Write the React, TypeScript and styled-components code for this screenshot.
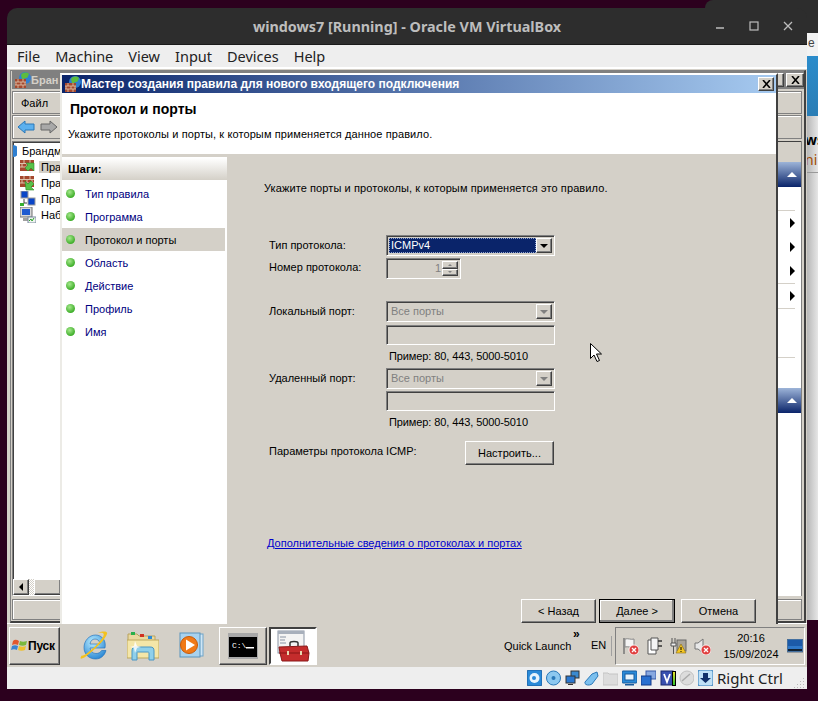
import React from 'react';
import styled, { createGlobalStyle, css } from 'styled-components';

const FACE = '#d4d0c8';
const UI_FONT = `'Liberation Sans', Arial, sans-serif`;

const GlobalStyle = createGlobalStyle`
  html, body { margin: 0; padding: 0; background: #2c001e; }
  * { box-sizing: border-box; }
  svg { flex-shrink: 0; }
`;

const raised = css`
  background: ${FACE};
  border-top: 1px solid #fff;
  border-left: 1px solid #fff;
  border-right: 1px solid #404040;
  border-bottom: 1px solid #404040;
  box-shadow: inset -1px -1px 0 #808080;
`;

const sunken = css`
  border-top: 1px solid #808080;
  border-left: 1px solid #808080;
  border-right: 1px solid #fff;
  border-bottom: 1px solid #fff;
  box-shadow: inset 1px 1px 0 #404040, inset -1px -1px 0 ${FACE};
`;

const Screen = styled.div`
  position: relative;
  width: 818px;
  height: 701px;
  overflow: hidden;
  background: #2c001e;
  font-family: ${UI_FONT};
  font-size: 11px;
  color: #000;
`;

/* the other host window that peeks out on the right */
const BackWindow = styled.div`
  position: absolute;
  left: 705px;
  top: 0;
  width: 113px;
  height: 620px;
  display: flex;
  flex-direction: column;
`;
const BackTitle = styled.div`
  height: 33px;
  background: #2d2d2d;
  border-radius: 8px 0 0 0;
`;
const BackMenu = styled.div`
  height: 23px;
  padding-left: 103px;
  background: #f2f2f2;
  font-size: 12px;
  color: #444;
  line-height: 20px;
`;
const BackBlue = styled.div`
  height: 60px;
  background: linear-gradient(#2b8ccb, #2a7db5);
`;
const BackBody = styled.div`
  flex: 1;
  padding-left: 100px;
  background: linear-gradient(90deg, #b8b8b8 102px, #e6e6e6 113px);
`;
const BackStrong = styled.div`
  margin-top: 14px;
  height: 20px;
  font: bold 14px 'Noto Sans', sans-serif;
  white-space: nowrap;
`;
const BackSub = styled.div`
  height: 23px;
  margin-left: -100px;
  padding-left: 100px;
  border-bottom: 1px solid #999;
  font: 14px 'Noto Sans', sans-serif;
  color: #a34b00;
  white-space: nowrap;
`;

/* VirtualBox host window */
const HostWindow = styled.div`
  position: absolute;
  left: 7px;
  top: 8px;
  width: 800px;
  height: 681px;
  display: flex;
  flex-direction: column;
  border-radius: 10px 10px 0 0;
  overflow: hidden;
`;
const HostTitle = styled.div`
  position: relative;
  flex: 0 0 37px;
  display: flex;
  align-items: center;
  justify-content: center;
  background: #2d2d2d;
  color: #bdbdbd;
  font: bold 14.35px 'Noto Sans', sans-serif;
  border-bottom: 1px solid #1a1a1a;
`;
const HostControls = styled.div`
  position: absolute;
  right: 8px;
  top: 13px;
  display: flex;
  gap: 18px;
  color: #bdbdbd;
`;
const HostMenu = styled.div`
  flex: 0 0 22px;
  display: flex;
  gap: 15px;
  padding-left: 10px;
  align-items: center;
  background: #eeeeee;
  color: #222;
  font: 14.5px 'Noto Sans', sans-serif;
`;
const Guest = styled.div`
  flex: 0 0 600px;
  display: flex;
  flex-direction: column;
  background: ${FACE};
`;
const GuestDesk = styled.div`
  position: relative;
  flex: 1;
  border-top: 2px solid #fff;
`;

/* mmc window behind the wizard */
const Mmc = styled.div`
  position: absolute;
  left: 3px;
  top: 1px;
  width: 796px;
  height: 553px;
  display: flex;
  flex-direction: column;
  padding-left: 1px;
  border: 1px solid #808080;
  border-right: 2px solid #404040;
  border-bottom: 2px solid #404040;
  background: ${FACE};
`;
const MmcTitle = styled.div`
  flex: 0 0 18px;
  display: flex;
  align-items: center;
  justify-content: space-between;
  padding: 0 0 0 3px;
  background: #808080;
  color: #d4d0c8;
  font-weight: bold;
`;
const MmcTitleLeft = styled.div`
  display: flex;
  align-items: center;
`;
const MmcTitleBtns = styled.div`
  display: flex;
  gap: 2px;
`;
const MmcBand = styled.div<{ $h: number; $mt: number; $pl: number }>`
  flex: 0 0 ${({ $h }) => $h}px;
  display: flex;
  align-items: center;
  gap: 5px;
  padding-left: ${({ $pl }) => $pl}px;
  margin: ${({ $mt }) => $mt}px 2px 0 0;
  border: 1px solid #808080;
  box-shadow: inset 1px 1px 0 #fff;
`;
const MmcContent = styled.div`
  flex: 1;
  display: flex;
  justify-content: space-between;
  margin: 2px 2px 0 0;
  min-height: 0;
`;
const TreePane = styled.div`
  width: 49px;
  display: flex;
  flex-direction: column;
  background: #fff;
  ${sunken};
  border-right: 0;
  padding: 1px 0 0 0;
  overflow: hidden;
`;
const TreeRow = styled.div<{ $indent: number; $active?: boolean }>`
  display: flex;
  align-items: center;
  gap: 3px;
  height: 16px;
  padding-left: ${({ $indent }) => $indent}px;
  white-space: nowrap;
  span {
    background: ${({ $active }) => ($active ? FACE : 'transparent')};
    padding-left: 2px;
  }
`;
const TreeSpacer = styled.div`
  flex: 1;
`;
const HScroll = styled.div`
  flex: 0 0 16px;
  display: flex;
`;
const ScrollBtn = styled.div`
  width: 16px;
  ${raised};
  display: flex;
  align-items: center;
  justify-content: center;
`;
const ScrollDither = styled.div`
  width: 5px;
  background: repeating-conic-gradient(#fff 0 25%, ${FACE} 0 50%) 0 0 / 2px 2px;
`;
const ScrollThumb = styled.div`
  flex: 1;
  ${raised};
`;
const StatusBox = styled.div`
  flex: 0 0 21px;
  margin: 3px 2px 1px 0;
  border: 1px solid #808080;
  box-shadow: inset 1px 1px 0 #fff;
`;
const LeftArrow = styled.div`
  width: 0;
  height: 0;
  border: 4px solid transparent;
  border-left: 0;
  border-right: 4px solid #000;
`;
const ActionPane = styled.div`
  width: 24px;
  display: flex;
  flex-direction: column;
  background: #fff;
  border-right: 1px solid #808080;
`;
const ActionHead = styled.div`
  flex: 0 0 21px;
  background: ${FACE};
  border-top: 1px solid #404040;
`;
const ActionBlue = styled.div`
  flex: 0 0 25px;
  background: linear-gradient(#9db4d8, #0a246a);
  display: flex;
  align-items: center;
  justify-content: center;
  padding-left: 4px;
`;
const UpArrow = styled.div`
  width: 0;
  height: 0;
  border: 5px solid transparent;
  border-top: 0;
  border-bottom: 5px solid #fff;
`;
const ActionRow = styled.div<{ $h: number; $line?: boolean }>`
  flex: 0 0 ${({ $h }) => $h}px;
  display: flex;
  align-items: center;
  justify-content: center;
  margin-right: 6px;
  border-bottom: ${({ $line }) => ($line ? '1px solid #d4d0c8' : '0')};
`;
const RightArrow = styled.div`
  width: 0;
  height: 0;
  margin-left: 12px;
  border: 5px solid transparent;
  border-right: 0;
  border-left: 5px solid #000;
`;
const ActionFoot = styled.div`
  flex: 1;
  background: #fff;
`;
const CloseBtn = styled.div<{ $w?: number }>`
  width: ${({ $w }) => $w ?? 16}px;
  height: 14px;
  ${raised};
  display: flex;
  align-items: center;
  justify-content: center;
`;

/* wizard */
const Wizard = styled.div`
  position: absolute;
  left: 53px;
  top: 4px;
  width: 718px;
  height: 551px;
  display: flex;
  flex-direction: column;
  background: ${FACE};
  border-left: 2px solid #ecebe6;
  border-right: 2px solid #404040;
  border-top: 2px solid #fff;
`;
const WizTitle = styled.div`
  flex: 0 0 18px;
  display: flex;
  align-items: center;
  padding: 0 2px 0 3px;
  color: #fff;
  font-weight: bold;
  font-size: 12px;
  background: linear-gradient(90deg, #0a246a, #a6caf0);
`;
const WizTitleText = styled.div`
  flex: 1;
`;
const WizHeader = styled.div`
  flex: 0 0 63px;
  padding: 8px 0 0 8px;
  background: #fff;
  border-bottom: 2px solid ${FACE};
`;
const WizHeading = styled.div`
  font-weight: bold;
  font-size: 14px;
  line-height: 16px;
`;
const WizSub = styled.div`
  margin-top: 10px;
  margin-left: -2px;
  line-height: 14px;
  letter-spacing: 0.1px;
`;
const WizBody = styled.div`
  flex: 1;
  display: flex;
  min-height: 0;
  background: #fff;
`;
const Steps = styled.div`
  width: 167px;
  padding-top: 1px;
  border-top: 1px solid ${FACE};
  border-right: 2px solid ${FACE};
`;
const StepsHead = styled.div`
  height: 22px;
  padding-left: 6px;
  display: flex;
  align-items: center;
  font-weight: bold;
  font-size: 11.5px;
  background: linear-gradient(#fff, ${FACE});
  margin-bottom: 2px;
`;
const StepRow = styled.div<{ $active?: boolean }>`
  height: 23px;
  display: flex;
  align-items: center;
  gap: 10px;
  padding-left: 4px;
  margin-right: 2px;
  color: ${({ $active }) => ($active ? '#000' : '#000080')};
  background: ${({ $active }) => ($active ? FACE : 'transparent')};
`;
const StepDot = styled.div`
  width: 9px;
  height: 9px;
  border-radius: 50%;
  background: radial-gradient(circle at 40% 35%, #a5e88c, #3fae2a 70%);
`;
const FormPane = styled.div`
  flex: 1;
  display: flex;
  flex-direction: column;
  background: ${FACE};
  padding-left: 35px;
  padding-top: 25px;
`;
const Intro = styled.div`
  line-height: 14px;
  margin-bottom: 40px;
  letter-spacing: 0.1px;
`;
const FormRow = styled.div<{ $mt?: number }>`
  display: grid;
  grid-template-columns: 117px 169px;
  align-items: start;
  padding-left: 5px;
  margin-top: ${({ $mt }) => $mt ?? 0}px;
`;
const FieldLabel = styled.div<{ $h: number }>`
  height: ${({ $h }) => $h}px;
  line-height: ${({ $h }) => $h - 1}px;
  white-space: nowrap;
`;
const Combo = styled.div<{ $disabled?: boolean }>`
  height: 21px;
  display: flex;
  padding: 2px;
  ${sunken};
  color: ${({ $disabled }) => ($disabled ? '#808080' : '#000')};
`;
const ComboValue = styled.div<{ $selected?: boolean }>`
  flex: 1;
  padding-left: 2px;
  line-height: 15px;
  color: ${({ $selected }) => ($selected ? '#fff' : 'inherit')};
  background: ${({ $selected }) => ($selected ? '#0a246a' : 'transparent')};
  outline: ${({ $selected }) => ($selected ? '1px dotted #8fa3d0' : '0')};
  outline-offset: -1px;
`;
const ComboBtn = styled.div`
  width: 16px;
  ${raised};
  display: flex;
  align-items: center;
  justify-content: center;
`;
const DownArrow = styled.div<{ $color: string }>`
  width: 0;
  height: 0;
  border: 4px solid transparent;
  border-bottom: 0;
  border-top: 4px solid ${({ $color }) => $color};
`;
const Spin = styled.div`
  width: 75px;
  height: 21px;
  display: flex;
  padding: 2px;
  ${sunken};
`;
const SpinValue = styled.div`
  flex: 1;
  text-align: right;
  padding-right: 1px;
  line-height: 15px;
  color: #808080;
`;
const SpinBtns = styled.div`
  width: 16px;
  display: flex;
  flex-direction: column;
`;
const SpinBtn = styled.div<{ $up?: boolean }>`
  flex: 1;
  ${raised};
  display: flex;
  align-items: center;
  justify-content: center;
  &::before {
    content: '';
    border: 2px solid transparent;
    ${({ $up }) =>
      $up
        ? css`
            border-top: 0;
            border-bottom: 2px solid #808080;
          `
        : css`
            border-bottom: 0;
            border-top: 2px solid #808080;
          `}
  }
`;
const TextField = styled.div<{ $mt: number }>`
  height: 20px;
  margin-top: ${({ $mt }) => $mt}px;
  ${sunken};
`;
const Hint = styled.div`
  padding-left: 3px;
  margin-top: 3px;
  line-height: 16px;
  height: 16px;
  letter-spacing: -0.1px;
`;
const PushButton = styled.div<{ $w: number; $ml?: number; $default?: boolean }>`
  width: ${({ $w }) => $w}px;
  height: 24px;
  margin-left: ${({ $ml }) => $ml ?? 0}px;
  display: flex;
  align-items: center;
  justify-content: center;
  ${raised};
  ${({ $default }) =>
    $default &&
    css`
      outline: 1px solid #000;
      outline-offset: -1px;
      box-shadow: inset -2px -2px 0 #808080, inset 1px 1px 0 #fff;
    `}
`;
const InfoLink = styled.a`
  margin-top: 71px;
  margin-left: 3px;
  line-height: 14px;
  color: #0000cc;
  text-decoration: underline;
`;
const WizFooter = styled.div`
  margin-top: auto;
  margin-bottom: 1px;
  display: flex;
  gap: 3px;
  padding-left: 257px;
`;

/* guest taskbar */
const Taskbar = styled.div`
  flex: 0 0 44px;
  display: flex;
  align-items: center;
  padding-left: 2px;
  background: ${FACE};
  border-top: 1px solid #fff;
`;
const StartBtn = styled.div`
  width: 51px;
  height: 38px;
  ${raised};
  display: flex;
  align-items: center;
  padding-left: 1px;
  font-weight: bold;
  font-size: 12px;
  letter-spacing: -0.2px;
`;
const QuickIcons = styled.div`
  width: 159px;
  display: flex;
  align-items: center;
  gap: 18px;
  padding-left: 19px;
`;
const TaskBtn = styled.div<{ $pressed?: boolean }>`
  width: 48px;
  height: 38px;
  margin-right: 2px;
  display: flex;
  align-items: center;
  justify-content: center;
  ${({ $pressed }) =>
    $pressed
      ? css`
          background: #fff;
          border-top: 2px solid #404040;
          border-left: 2px solid #404040;
          border-right: 2px solid #fff;
          border-bottom: 2px solid #fff;
        `
      : raised}
`;
const TaskSpacer = styled.div`
  flex: 1;
`;
const QuickLaunch = styled.div`
  position: relative;
  width: 87px;
  padding-left: 3px;
  line-height: 14px;
`;
const Chevrons = styled.div`
  position: absolute;
  left: 72px;
  top: -12px;
  font-weight: bold;
  font-size: 12px;
`;
const Lang = styled.div`
  width: 24px;
  padding-left: 3px;
  border-right: 1px solid #a0a0a0;
  height: 20px;
  line-height: 18px;
`;
const Tray = styled.div`
  width: 190px;
  height: 38px;
  margin: 0 2px 0 3px;
  display: flex;
  align-items: center;
  gap: 7px;
  padding-left: 6px;
  border: 1px solid #808080;
  border-right-color: #fff;
  border-bottom-color: #fff;
`;
const Clock = styled.div`
  flex: 0 0 62px;
  margin: 0 -2px 0 2px;
  text-align: center;
  line-height: 16px;
`;

/* virtualbox status bar */
const HostStatus = styled.div`
  flex: 1;
  display: flex;
  align-items: center;
  padding-left: 520px;
  gap: 4px;
  background: #eeeeee;
`;
const HostKey = styled.div`
  color: #222;
  font: 15px 'Noto Sans', sans-serif;
  white-space: nowrap;
`;
const Grip = styled.svg`
  margin-left: auto;
  margin-right: 2px;
  align-self: flex-end;
  margin-bottom: 1px;
`;
const Led = styled.div`
  width: 4px;
  height: 15px;
  margin: 0 -1px 0 -7px;
  border: 1px solid #000;
  background: linear-gradient(#e8e030, #2cc02c);
`;
const MouseCursor = styled.svg`
  position: absolute;
  left: 589px;
  top: 342px;
`;

/* small hand-drawn icons */
const Brick = () => (
  <svg width="16" height="16" viewBox="0 0 16 16">
    <circle cx="10" cy="6" r="6" fill="#2f7fd0" />
    <path d="M6 3c2-3 6-3 8-1-1 2-1 4-3 4S9 8 7 7z" fill="#5dbb3f" />
    <rect x="0" y="7" width="11" height="9" fill="#a5482e" />
    <path d="M0 10h11M0 13h11M3 7v3M8 7v3M1 10v3M6 10v3M10 10v3M3 13v3M8 13v3" stroke="#e0c8b0" strokeWidth="0.8" />
  </svg>
);
const RuleIcon = ({ down }: { down?: boolean }) => (
  <svg width="16" height="16" viewBox="0 0 16 16">
    <rect x="0" y="1" width="14" height="11" fill="#a5482e" />
    <path d="M0 4.500h14M0 8h14M4 1v3.500M10 1v3.500M2 4.500V8M7 4.500V8M12 4.500V8" stroke="#dcc4ac" />
    <path
      d={down ? 'M5 6l3 3 3-3 3 3-3 3 3 3H6z' : 'M6 4h8v8l-3-3-3 3-3-3 3-3z'}
      fill="#58c24a"
      stroke="#2c8a26"
      strokeWidth="0.6"
    />
  </svg>
);
const NetIcon = () => (
  <svg width="16" height="16" viewBox="0 0 16 16">
    <rect x="1" y="0" width="7" height="7" fill="#0a46c8" stroke="#9a9a9a" />
    <rect x="8" y="7" width="7" height="7" fill="#0a46c8" stroke="#9a9a9a" />
    <path d="M4 8v4h3" stroke="#444" fill="none" />
    <rect x="0" y="12" width="4" height="3" fill="#36b030" />
  </svg>
);
const MonitorIcon = () => (
  <svg width="16" height="16" viewBox="0 0 16 16">
    <rect x="0" y="0" width="12" height="10" fill="#d8d8d8" stroke="#707070" />
    <rect x="2" y="2" width="8" height="6" fill="#1e5ad0" />
    <rect x="3" y="11" width="6" height="3" fill="#a0a0a0" />
    <rect x="8" y="10" width="8" height="6" fill="#eef4ee" stroke="#7a8aa0" />
    <path d="M9 14l2-2 1 2 2-3" stroke="#2ca02c" fill="none" />
  </svg>
);
const CloseGlyph = () => (
  <svg width="9" height="8" viewBox="0 0 9 8">
    <path d="M1 0l7 8M8 0L1 8" stroke="#000" strokeWidth="1.6" />
  </svg>
);
const WinFlag = () => (
  <svg width="17" height="15" viewBox="0 0 17 15">
    <path d="M2 3c2-2 4-1 6 0l-1 4C5 6 3 6 1 7z" fill="#e2572c" />
    <path d="M9 3c2 1 4 1 7 0l-1 4c-2 1-5 1-7 0z" fill="#7ab93c" />
    <path d="M1 8c2-1 4-1 6 0l-1 4c-2-1-4-1-6 0z" fill="#3a82d0" />
    <path d="M8 8c2 1 5 1 7 0l-1 4c-2 1-5 1-7 0z" fill="#eec12e" />
  </svg>
);
const IeIcon = () => (
  <svg width="30" height="30" viewBox="0 0 30 30">
    <defs>
      <radialGradient id="ie" cx="40%" cy="30%" r="80%">
        <stop offset="0" stopColor="#b8ecff" />
        <stop offset="1" stopColor="#1f7fd0" />
      </radialGradient>
    </defs>
    <path
      d="M26 17H11c.4 3.500 3 5.500 6 5.500 2.400 0 4.400-1 5.600-3H27C25.400 25 21.600 28 16.600 28 9.800 28 5 23 5 16.500S10 4 16.500 4C23 4 27.500 9.500 26 17zM11 13h10c-.2-3-2.300-5-5-5-2.700 0-4.700 2-5 5z"
      fill="url(#ie)"
      stroke="#1769b8"
      strokeWidth="0.6"
    />
    <path d="M3 24C-1 30 4 28 10 23 17 17 26 9 28 3c1-3-4-3-9-1 5-1 7 0 5 4C21 11 13 19 7 23c-3 2-5 2-4 1z" fill="#f3c21e" />
  </svg>
);
const FolderIcon = () => (
  <svg width="32" height="30" viewBox="0 0 32 30">
    <path d="M1 3h9l2 2h16v6H1z" fill="#e9d9a0" stroke="#b9a35e" />
    <rect x="4" y="1" width="4" height="3" fill="#27b04a" />
    <rect x="13" y="3" width="4" height="3" fill="#d03020" />
    <rect x="21" y="5" width="4" height="3" fill="#2a8ad8" />
    <path d="M0 9h32v18H0z" fill="#f4e6a8" stroke="#bda85e" />
    <path d="M5 29v-9c0-3 1-4 4-4h14c3 0 4 1 4 4v9h-5v-7c0-1-1-1-1-1h-10c-1 0-1 0-1 1v7z" fill="#8fd0ea" stroke="#4a96c4" />
    <path d="M8 10l2 5 4 1-4 1-2 5-1-5-4-1 4-1z" fill="#fff" opacity="0.85" />
  </svg>
);
const MediaIcon = () => (
  <svg width="30" height="28" viewBox="0 0 30 28">
    <rect x="6" y="2" width="20" height="22" fill="#cfe6f5" stroke="#6ea4c8" />
    <rect x="3" y="1" width="20" height="24" fill="#a8d2ee" stroke="#5a94bc" />
    <circle cx="12" cy="13" r="8.500" fill="#f07a18" stroke="#c85a08" />
    <path d="M9 7.500l9 5.500-9 5.500z" fill="#fff" />
  </svg>
);
const CmdIcon = () => (
  <svg width="30" height="26" viewBox="0 0 30 26">
    <rect x="0" y="0" width="30" height="26" fill="#a8a8a8" />
    <rect x="1" y="4" width="28" height="20" fill="#000" />
    <text x="4" y="15" fill="#fff" fontSize="8" fontFamily="Liberation Mono, monospace">C:\</text>
    <rect x="18" y="14" width="8" height="1.500" fill="#fff" />
  </svg>
);
const ToolboxIcon = () => (
  <svg width="34" height="34" viewBox="0 0 34 34">
    <rect x="2" y="2" width="26" height="22" fill="#f4f4f4" stroke="#8a94a4" />
    <rect x="2" y="2" width="26" height="3" fill="#a8b0bc" />
    <path d="M4 8h6M4 11h5M4 14h6" stroke="#8a94a4" />
    <path d="M14 17v-3c0-2 8-2 8 0v3" fill="none" stroke="#333" strokeWidth="1.500" />
    <path d="M3 18l28-1 2 7-1 8H6l-2-8z" fill="#c42c2c" stroke="#8a1818" />
    <path d="M3 24h30" stroke="#881414" />
    <rect x="11" y="22" width="2" height="4" fill="#e8d8b0" />
    <rect x="24" y="22" width="2" height="4" fill="#e8d8b0" />
  </svg>
);
const ErrBadge = () => (
  <g>
    <circle cx="12" cy="13" r="5" fill="#e04040" stroke="#fff" strokeWidth="0.800" />
    <path d="M10 11l4 4M14 11l-4 4" stroke="#fff" strokeWidth="1.300" />
  </g>
);
const FlagIcon = () => (
  <svg width="17" height="18" viewBox="0 0 17 18">
    <path d="M2 1v16" stroke="#777" strokeWidth="1.500" />
    <path d="M3 2c3-1 6 1 9 0v8c-3 1-6-1-9 0z" fill="#f4f4f4" stroke="#888" />
    <ErrBadge />
  </svg>
);
const PlugIcon = () => (
  <svg width="17" height="18" viewBox="0 0 17 18">
    <path d="M2 3h8v14H2z" fill="#fff" stroke="#555" />
    <path d="M5 1h7v12H5z" fill="#f4f4f4" stroke="#555" />
    <path d="M12 4h4M12 9h4" stroke="#333" strokeWidth="1.500" />
  </svg>
);
const NetWarnIcon = () => (
  <svg width="17" height="18" viewBox="0 0 17 18">
    <path d="M2 1v5M5 1v5M1 6h5v3H1zM3.500 9v8" stroke="#555" fill="#eee" />
    <rect x="7" y="3" width="9" height="11" fill="#a9a49a" stroke="#666" />
    <path d="M11 7l5 9H6z" fill="#f3c623" stroke="#8a6a10" strokeWidth="0.600" />
    <path d="M11 10v3M11 14v1" stroke="#000" />
  </svg>
);
const SpeakerIcon = () => (
  <svg width="17" height="18" viewBox="0 0 17 18">
    <path d="M1 6h3l5-4v14l-5-4H1z" fill="#e8e8e8" stroke="#777" />
    <ErrBadge />
  </svg>
);
const DesktopIcon = () => (
  <svg width="16" height="14" viewBox="0 0 16 14">
    <rect x="0" y="0" width="16" height="13" fill="#2f78c8" stroke="#5a6878" />
    <rect x="1" y="1" width="14" height="6" fill="#1c5aa8" />
    <rect x="1" y="10" width="14" height="2" fill="#123" />
  </svg>
);
const V = ({ children }: { children: React.ReactNode }) => (
  <svg width="15" height="16" viewBox="0 0 15 16">
    {children}
  </svg>
);
const Cursor = () => (
  <MouseCursor width="14" height="22" viewBox="0 0 14 22">
    <path d="M1.500 1.500v15l3.500-3.500 3 6.500 2.500-1-3-6.500h5z" fill="#fff" stroke="#000" strokeWidth="1" />
  </MouseCursor>
);

const STEPS = ['Тип правила', 'Программа', 'Протокол и порты', 'Область', 'Действие', 'Профиль', 'Имя'];
const MENU = ['File', 'Machine', 'View', 'Input', 'Devices', 'Help'];

const PortGroup = ({ label, mt, fieldGap }: { label: string; mt: number; fieldGap: number }) => (
  <>
    <FormRow $mt={mt}>
      <FieldLabel $h={21}>{label}</FieldLabel>
      <Combo $disabled>
        <ComboValue>Все порты</ComboValue>
        <ComboBtn>
          <DownArrow $color="#808080" />
        </ComboBtn>
      </Combo>
    </FormRow>
    <FormRow>
      <div />
      <div>
        <TextField $mt={fieldGap} />
        <Hint>Пример: 80, 443, 5000-5010</Hint>
      </div>
    </FormRow>
  </>
);

const App = () => (
  <Screen>
    <GlobalStyle />
    <BackWindow>
      <BackTitle />
      <BackMenu>e</BackMenu>
      <BackBlue />
      <BackBody>
        <BackStrong>ws</BackStrong>
        <BackSub>ni</BackSub>
      </BackBody>
    </BackWindow>

    <HostWindow>
      <HostTitle>
        windows7 [Running] - Oracle VM VirtualBox
        <HostControls>
          <svg width="16" height="16" viewBox="0 0 16 16">
            <path d="M1 7h8" stroke="currentColor" strokeWidth="1.500" />
          </svg>
          <svg width="16" height="16" viewBox="0 0 16 16">
            <rect x="1" y="1" width="8" height="8" fill="none" stroke="currentColor" strokeWidth="1.200" />
          </svg>
          <svg width="16" height="16" viewBox="0 0 16 16">
            <path d="M1 1l8 8M9 1L1 9" stroke="currentColor" strokeWidth="1.300" />
          </svg>
        </HostControls>
      </HostTitle>
      <HostMenu>
        {MENU.map((m) => (
          <div key={m}>{m}</div>
        ))}
      </HostMenu>

      <Guest>
        <GuestDesk>
          <Mmc>
            <MmcTitle>
              <MmcTitleLeft>
                <Brick />
                Бран
              </MmcTitleLeft>
              <MmcTitleBtns>
                <CloseBtn $w={18} />
                <CloseBtn $w={18}>
                  <CloseGlyph />
                </CloseBtn>
              </MmcTitleBtns>
            </MmcTitle>
            <MmcBand $h={23} $mt={2} $pl={8}>
              Файл
            </MmcBand>
            <MmcBand $h={24} $mt={1} $pl={4}>
              <svg width="18" height="14" viewBox="0 0 18 14">
                <path d="M1 7l7-6v3h9v6H8v3z" fill="#5cb0ee" stroke="#2a78b8" />
              </svg>
              <svg width="18" height="14" viewBox="0 0 18 14">
                <path d="M17 7l-7-6v3H1v6h9v3z" fill="#a8a8a8" stroke="#666" />
              </svg>
            </MmcBand>
            <MmcContent>
              <TreePane>
                <TreeRow $indent={0}>
                  <svg width="4" height="12" viewBox="0 0 4 12">
                    <path d="M0 0a6 6 0 010 12z" fill="#2f7fd0" />
                  </svg>
                  <span>Брандм</span>
                </TreeRow>
                <TreeRow $indent={7} $active>
                  <RuleIcon />
                  <span>Пра</span>
                </TreeRow>
                <TreeRow $indent={7}>
                  <RuleIcon down />
                  <span>Пра</span>
                </TreeRow>
                <TreeRow $indent={7}>
                  <NetIcon />
                  <span>Пра</span>
                </TreeRow>
                <TreeRow $indent={7}>
                  <MonitorIcon />
                  <span>Наб</span>
                </TreeRow>
                <TreeSpacer />
                <HScroll>
                  <ScrollBtn>
                    <LeftArrow />
                  </ScrollBtn>
                  <ScrollDither />
                  <ScrollThumb />
                </HScroll>
              </TreePane>
              <ActionPane>
                <ActionHead />
                <ActionBlue>
                  <UpArrow />
                </ActionBlue>
                <ActionRow $h={24} $line />
                <ActionRow $h={24}>
                  <RightArrow />
                </ActionRow>
                <ActionRow $h={24}>
                  <RightArrow />
                </ActionRow>
                <ActionRow $h={25} $line>
                  <RightArrow />
                </ActionRow>
                <ActionRow $h={25} $line>
                  <RightArrow />
                </ActionRow>
                <ActionRow $h={49} $line />
                <ActionRow $h={30} />
                <ActionBlue>
                  <UpArrow />
                </ActionBlue>
                <ActionFoot />
              </ActionPane>
            </MmcContent>
            <StatusBox />
          </Mmc>

          <Wizard>
            <WizTitle>
              <Brick />
              <WizTitleText>Мастер создания правила для нового входящего подключения</WizTitleText>
              <CloseBtn>
                <CloseGlyph />
              </CloseBtn>
            </WizTitle>
            <WizHeader>
              <WizHeading>Протокол и порты</WizHeading>
              <WizSub>Укажите протоколы и порты, к которым применяется данное правило.</WizSub>
            </WizHeader>
            <WizBody>
              <Steps>
                <StepsHead>Шаги:</StepsHead>
                {STEPS.map((s, i) => (
                  <StepRow key={s} $active={i === 2}>
                    <StepDot />
                    {s}
                  </StepRow>
                ))}
              </Steps>
              <FormPane>
                <Intro>Укажите порты и протоколы, к которым применяется это правило.</Intro>
                <FormRow>
                  <FieldLabel $h={21}>Тип протокола:</FieldLabel>
                  <Combo>
                    <ComboValue $selected>ICMPv4</ComboValue>
                    <ComboBtn>
                      <DownArrow $color="#000" />
                    </ComboBtn>
                  </Combo>
                </FormRow>
                <FormRow $mt={2}>
                  <FieldLabel $h={19}>Номер протокола:</FieldLabel>
                  <Spin>
                    <SpinValue>1</SpinValue>
                    <SpinBtns>
                      <SpinBtn $up />
                      <SpinBtn />
                    </SpinBtns>
                  </Spin>
                </FormRow>
                <PortGroup label="Локальный порт:" mt={22} fieldGap={3} />
                <PortGroup label="Удаленный порт:" mt={4} fieldGap={2} />
                <FormRow $mt={11}>
                  <FieldLabel $h={21}>Параметры протокола ICMP:</FieldLabel>
                  <PushButton $w={89} $ml={79}>
                    Настроить...
                  </PushButton>
                </FormRow>
                <InfoLink>Дополнительные сведения о протоколах и портах</InfoLink>
                <WizFooter>
                  <PushButton $w={75}>&lt; Назад</PushButton>
                  <PushButton $w={76} $default>
                    Далее &gt;
                  </PushButton>
                  <PushButton $w={75} $ml={3}>
                    Отмена
                  </PushButton>
                </WizFooter>
              </FormPane>
            </WizBody>
          </Wizard>
        </GuestDesk>

        <Taskbar>
          <StartBtn>
            <WinFlag />
            Пуск
          </StartBtn>
          <QuickIcons>
            <IeIcon />
            <FolderIcon />
            <MediaIcon />
          </QuickIcons>
          <TaskBtn>
            <CmdIcon />
          </TaskBtn>
          <TaskBtn $pressed>
            <ToolboxIcon />
          </TaskBtn>
          <TaskSpacer />
          <QuickLaunch>
            <Chevrons>»</Chevrons>
            Quick Launch
          </QuickLaunch>
          <Lang>EN</Lang>
          <Tray>
            <FlagIcon />
            <PlugIcon />
            <NetWarnIcon />
            <SpeakerIcon />
            <Clock>
              20:16
              <br />
              15/09/2024
            </Clock>
            <DesktopIcon />
          </Tray>
        </Taskbar>
      </Guest>

      <HostStatus>
        <V>
          <rect x="0" y="0" width="15" height="16" rx="2" fill="#2a8ad8" stroke="#185a9c" />
          <circle cx="7.500" cy="8" r="5" fill="#e8f4fc" />
          <circle cx="7" cy="8" r="2" fill="#2a8ad8" />
        </V>
        <V>
          <circle cx="7.500" cy="8" r="7" fill="#8cc8f0" stroke="#2a78b8" />
          <circle cx="7.500" cy="8" r="2" fill="#2a78b8" />
        </V>
        <V>
          <rect x="6" y="1" width="8" height="7" fill="#3a8ad0" stroke="#333" />
          <rect x="1" y="6" width="9" height="7" fill="#2a78d0" stroke="#333" />
          <rect x="3" y="14" width="5" height="1" fill="#333" />
        </V>
        <V>
          <path d="M1 12l7-8 5-2 1 4-6 8c-3 2-8 1-7-2z" fill="#7cc0ee" stroke="#2a78b8" />
        </V>
        <V>
          <path d="M0 3h5l1 1h9v11H0z" fill="#dcdcdc" stroke="#c4c4c4" />
        </V>
        <V>
          <rect x="0" y="1" width="15" height="12" rx="1" fill="#2a8ad8" stroke="#185a9c" />
          <rect x="3" y="4" width="9" height="6" fill="#e8f4fc" stroke="#185a9c" />
          <rect x="3" y="14" width="9" height="1.500" fill="#185a9c" />
        </V>
        <V>
          <rect x="5" y="1" width="10" height="8" fill="#88a8e0" stroke="#3a5aa8" />
          <rect x="0" y="6" width="10" height="9" fill="#2a70d0" stroke="#123a88" />
        </V>
        <V>
          <rect x="1" y="1" width="12" height="14" fill="#3850b0" stroke="#1a2a70" />
          <path d="M4 4l3 8 3-8" stroke="#fff" strokeWidth="1.800" fill="none" />
        </V>
        <Led />
        <V>
          <circle cx="8" cy="8" r="7" fill="#dcdcdc" stroke="#c0c0c0" />
          <path d="M3 11l8-7" stroke="#aaa" strokeWidth="1.500" />
        </V>
        <V>
          <rect x="0" y="0" width="15" height="16" rx="2" fill="#bfe0f6" stroke="#2a78b8" />
          <path d="M5 3h5v5h3l-5.500 5L2 8h3z" fill="#10306a" />
        </V>
        <HostKey>Right Ctrl</HostKey>
        <Grip width="11" height="11" viewBox="0 0 11 11">
          <path d="M9 1h1v1H9zM6 4h1v1H6zM9 4h1v1H9zM3 7h1v1H3zM6 7h1v1H6zM9 7h1v1H9zM0 10h1v1H0zM3 10h1v1H3zM6 10h1v1H6zM9 10h1v1H9z" fill="#b8b8b8" />
        </Grip>
      </HostStatus>
    </HostWindow>

    <Cursor />
  </Screen>
);

export default App;
